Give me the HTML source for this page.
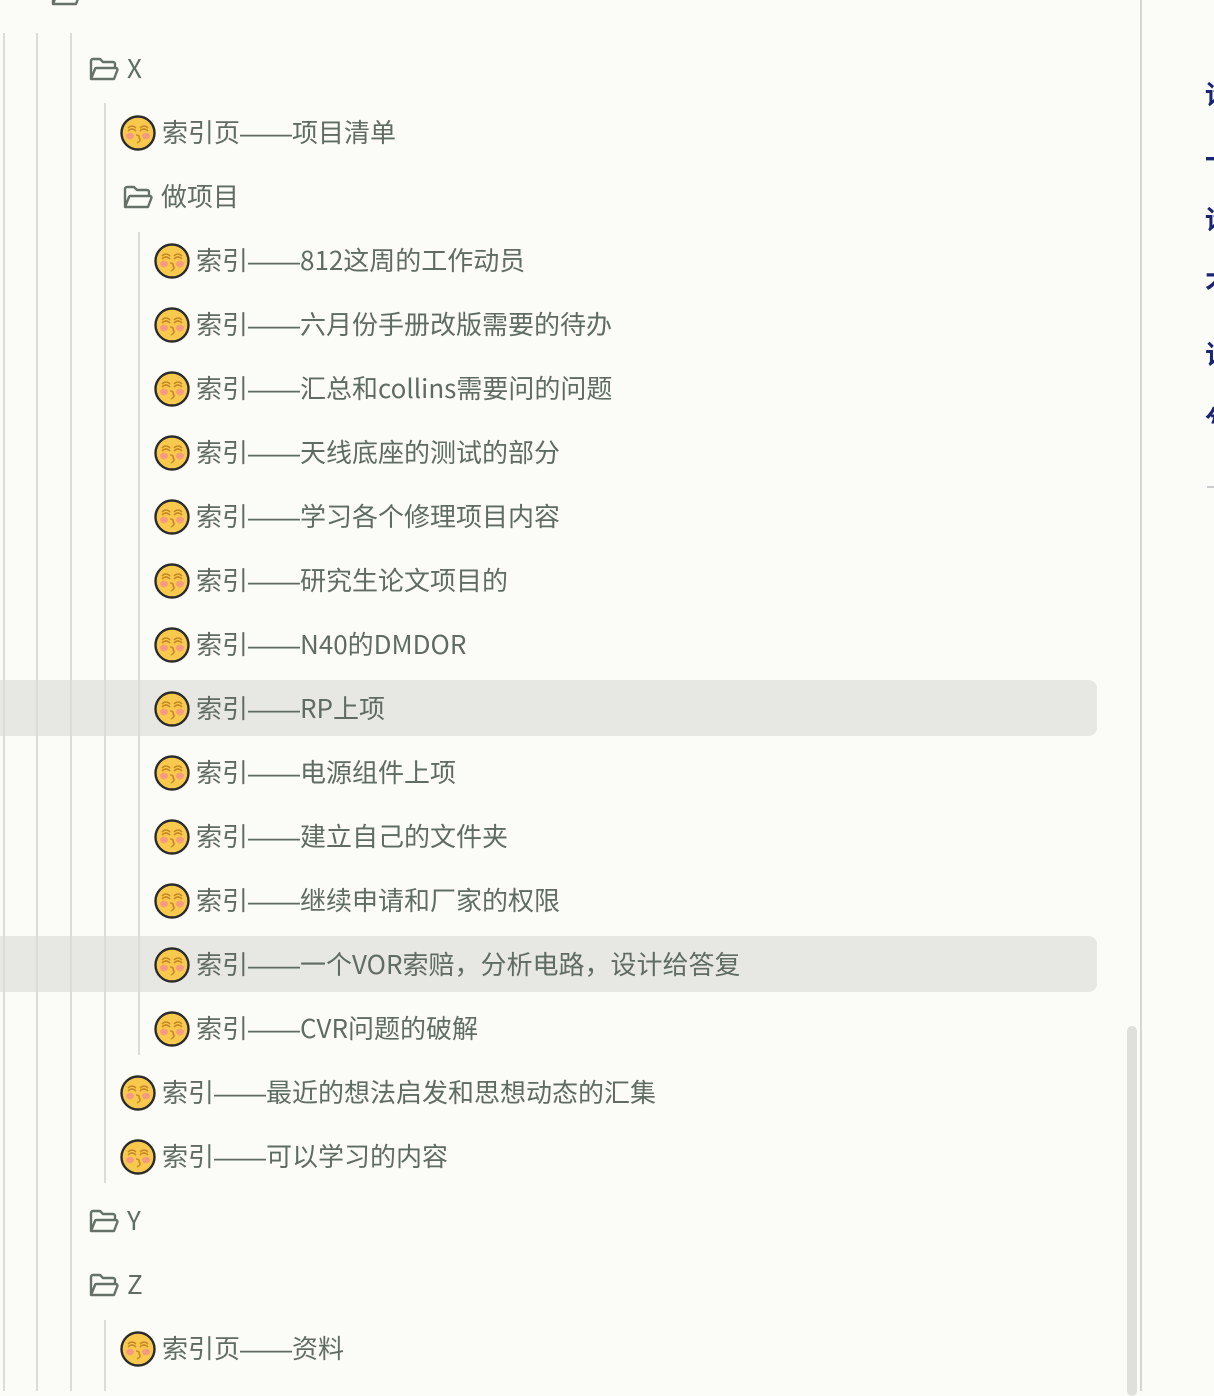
<!DOCTYPE html>
<html><head><meta charset="utf-8"><style>
body{margin:0;width:1214px;height:1391px;background:#fbfcf8;position:relative;overflow:hidden;font-family:"Noto Sans CJK SC","Liberation Sans",sans-serif;color:#5f6b63}
.v{position:absolute;width:2px;background:#dcdcd6}
.row{position:absolute;height:56px;line-height:56px;font-size:26px;letter-spacing:0;white-space:nowrap}
.hl{position:absolute;left:0;width:1097px;height:56px;background:#e7e8e3;border-radius:0 8px 8px 0}
.fd,.em{position:absolute}
.rt{position:absolute;left:1205px;color:#1a2470;font-size:26px;font-weight:bold;font-family:"Noto Sans CJK SC",sans-serif}
</style></head><body>
<div class="hl" style="top:680px"></div>
<div class="hl" style="top:936px"></div>
<div class="v" style="left:3px;top:33px;height:1358px"></div>
<div class="v" style="left:36px;top:33px;height:1358px"></div>
<div class="v" style="left:70px;top:33px;height:1358px"></div>
<div class="v" style="left:104px;top:103px;height:1080px"></div>
<div class="v" style="left:138px;top:232px;height:823px"></div>
<div class="v" style="left:104px;top:1320px;height:71px"></div>
<div style="position:absolute;left:1140px;top:0;width:2px;height:1391px;background:#d2d8d0"></div>
<div style="position:absolute;left:1127px;top:1026px;width:10px;height:370px;border-radius:5px;background:#dfe0db"></div>
<div style="position:absolute;left:1207px;top:486px;width:7px;height:2px;background:#ccc"></div>
<div class="rt" style="top:75px">论</div><div class="rt" style="top:140px">一</div><div class="rt" style="top:200px">论</div><div class="rt" style="top:265px">不</div><div class="rt" style="top:335px">订</div><div class="rt" style="top:400px">兮</div>
<div id="c"></div>
<script>
const folder=(x,y)=>`<svg class="fd" style="left:${x}px;top:${y}px" width="32" height="28" viewBox="0 0 32 28"><path d="M3 24V6a2 2 0 0 1 2-2h7l3 3h10a2 2 0 0 1 2 2v3M3 24l4-10a2 2 0 0 1 2-1h19a1.5 1.5 0 0 1 1.4 2L26 24Z" fill="none" stroke="#667268" stroke-width="2.4" stroke-linejoin="round"/></svg>`;
const emo=(x,cy)=>`<svg class="em" style="left:${x}px;top:${cy-18}px" width="36" height="36" viewBox="0 0 36 36"><circle cx="18" cy="18" r="16.5" fill="#f9c94e" stroke="#2b2b2b" stroke-width="2.4"/><path d="M8 13q4-4 8 0M20 13q4-4 8 0M8 16q4-4 8 0M20 16q4-4 8 0" fill="none" stroke="#c98a2a" stroke-width="1.6"/><ellipse cx="10" cy="21" rx="4" ry="3.2" fill="#f59a7f"/><ellipse cx="26" cy="21" rx="4" ry="3.2" fill="#f59a7f"/><path d="M16 20q4 0 3 3q3 2-2 5" fill="none" stroke="#c98a2a" stroke-width="1.6"/></svg>`;
const D='<span style="font-family:\'Liberation Sans\';letter-spacing:0">——</span>';
const rows=[
['f',89,69,'X'],['e',120,133,'索引页——项目清单'],['f',123,197,'做项目'],
['e',154,261,'索引——812这周的工作动员'],['e',154,325,'索引——六月份手册改版需要的待办'],['e',154,389,'索引——汇总和collins需要问的问题'],
['e',154,453,'索引——天线底座的测试的部分'],['e',154,517,'索引——学习各个修理项目内容'],['e',154,581,'索引——研究生论文项目的'],
['e',154,645,'索引——N40的DMDOR'],['e',154,709,'索引——RP上项'],['e',154,773,'索引——电源组件上项'],
['e',154,837,'索引——建立自己的文件夹'],['e',154,901,'索引——继续申请和厂家的权限'],['e',154,965,'索引——一个VOR索赔，分析电路，设计给答复'],
['e',154,1029,'索引——CVR问题的破解'],['e',120,1093,'索引——最近的想法启发和思想动态的汇集'],['e',120,1157,'索引——可以学习的内容'],
['f',89,1221,'Y'],['f',89,1285,'Z'],['e',120,1349,'索引页——资料']];
let h='';
for(const [t,x,cy,s0] of rows){
 const s=s0.replace('——',D);
 if(t=='f'){h+=folder(x-1,cy-14);h+=`<div class="row" style="left:${x+38}px;top:${cy-29}px">${s}</div>`;}
 else{h+=emo(x,cy);h+=`<div class="row" style="left:${x+42}px;top:${cy-29}px">${s}</div>`;}
}
h+=folder(50,-20);
document.getElementById('c').innerHTML=h;
</script>
</body></html>
